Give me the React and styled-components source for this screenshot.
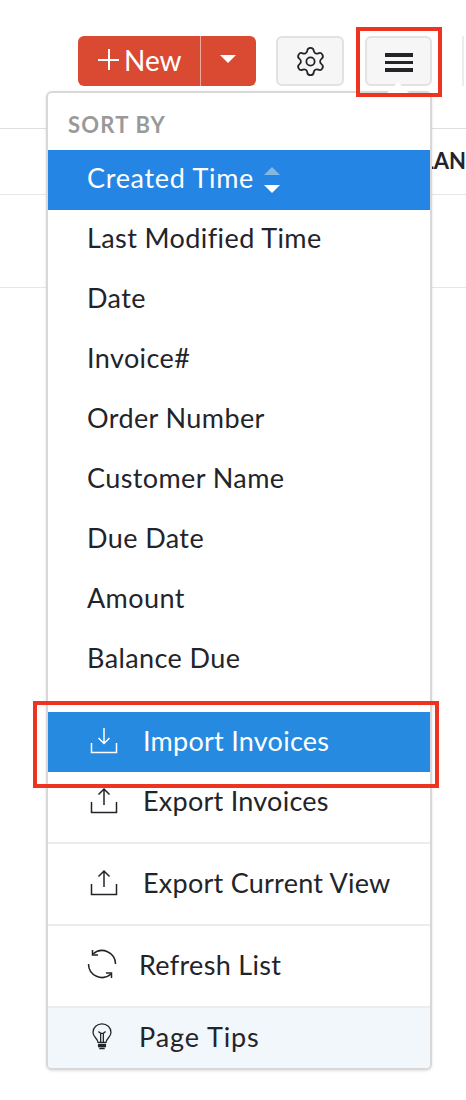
import React from 'react';
import styled, { createGlobalStyle } from 'styled-components';
import { Settings } from 'lucide-react';

const sortOptions = [
  'Last Modified Time',
  'Date',
  'Invoice#',
  'Order Number',
  'Customer Name',
  'Due Date',
  'Amount',
  'Balance Due',
];

const ImportIcon = () => (
  <svg width="28" height="28" viewBox="0 0 28 28" fill="none" stroke="currentColor" strokeWidth="1.5">
    <path d="M14 1v15M8.500 11l5.500 5.500 5.500-5.500" />
    <path d="M1.500 16v9.500h25V16" />
  </svg>
);

const ExportIcon = () => (
  <svg width="28" height="28" viewBox="0 0 28 28" fill="none" stroke="currentColor" strokeWidth="1.500">
    <path d="M14 18V2M8.500 7.500 14 2l5.500 5.500" />
    <path d="M1.500 15v10.500h25V15" />
  </svg>
);

const RefreshIcon = () => (
  <svg width="30" height="30" viewBox="0 0 30 30" fill="none" stroke="currentColor" strokeWidth="1.500">
    <path d="M6 5A13.500 13.500 0 0 1 28.500 15" />
    <path d="M5.500 1v5h5.500" />
    <path d="M24 25A13.500 13.500 0 0 1 1.500 15" />
    <path d="M24.500 29v-5H19" />
  </svg>
);

const BulbIcon = () => (
  <svg width="20" height="27" viewBox="0 0 22 30" fill="none" stroke="currentColor" strokeWidth="1.400">
    <path d="M6.500 21.500c0-4-5.500-6-5.500-11C1 5 5.500 1 11 1s10 4 10 9.500c0 5-5.500 7-5.500 11z" />
    <path d="M7 9.500l2.500 2h3l2.500-2M9.500 11.500v10M12.500 11.500v10" />
    <path d="M6.500 24h9M6.500 26h9M8 28.300h6" strokeWidth="1.800" />
  </svg>
);

const App = () => {
  return (
    <Page>
      <GlobalStyle />
      <Toolbar>
        <NewButton>
          <NewLabel>
            <PlusIcon />
            New
          </NewLabel>
          <NewCaret>
            <Caret />
          </NewCaret>
        </NewButton>
        <ToolButton $width={68}>
          <Settings size={33} strokeWidth={1.3} />
        </ToolButton>
        <ToolButton $width={67}>
          <BurgerLines />
          <Callout $inset="-11px -12px -13px -11px" />
        </ToolButton>
        <ToolbarDivider />
      </Toolbar>
      <HeaderRow>
        <HeaderLabel>LAN</HeaderLabel>
      </HeaderRow>
      <BodyRow />

      <Menu>
        <MenuHeading>SORT BY</MenuHeading>
        <MenuItem $active>
          Created Time
          <SortArrows>
            <ArrowUp />
            <ArrowDown />
          </SortArrows>
        </MenuItem>
        {sortOptions.map((option) => (
          <MenuItem key={option}>{option}</MenuItem>
        ))}
        <ActionGroup>
          <ActionItem $active>
            <ImportIcon />
            Import Invoices
            <Callout $inset="-11px -9px -16px -15px" />
          </ActionItem>
          <ActionItem>
            <ExportIcon />
            Export Invoices
          </ActionItem>
        </ActionGroup>
        <SingleGroup>
          <ActionItem>
            <ExportIcon />
            Export Current View
          </ActionItem>
        </SingleGroup>
        <SingleGroup>
          <UtilityItem>
            <RefreshIcon />
            Refresh List
          </UtilityItem>
        </SingleGroup>
        <TipsItem>
          <BulbIcon />
          Page Tips
        </TipsItem>
      </Menu>
    </Page>
  );
};

export default App;

const GlobalStyle = createGlobalStyle`
  html, body {
    margin: 0;
    background: #fff;
  }
  * {
    box-sizing: border-box;
  }
`;

const Page = styled.div`
  position: relative;
  width: 466px;
  height: 1100px;
  overflow: hidden;
  background: #fff;
  color: #23242a;
  font-family: Lato, "Liberation Sans", sans-serif;
`;

const Toolbar = styled.div`
  display: flex;
  align-items: flex-start;
  height: 129px;
  padding: 36px 0 0 78px;
  border-bottom: 1px solid #dedede;
`;

const NewButton = styled.div`
  display: flex;
  width: 178px;
  height: 50px;
  margin-right: 20px;
  border-radius: 6px;
  background: #da4a33;
  color: #fff;
`;

const NewLabel = styled.div`
  display: flex;
  align-items: center;
  gap: 5px;
  width: 123px;
  padding: 0 0 3px 20px;
  border-right: 1px solid #eda99c;
  font-size: 28px;
`;

const PlusIcon = styled.span`
  width: 21px;
  height: 21px;
  background:
    linear-gradient(#fff, #fff) center / 21px 2px no-repeat,
    linear-gradient(#fff, #fff) center / 2px 21px no-repeat;
`;

const NewCaret = styled.div`
  display: flex;
  flex: 1;
  align-items: center;
  justify-content: center;
  padding: 0 2px 4px 0;
`;

const Caret = styled.span`
  border-left: 8px solid transparent;
  border-right: 8px solid transparent;
  border-top: 8px solid #fff;
`;

const ToolButton = styled.div`
  position: relative;
  display: flex;
  flex: none;
  align-items: center;
  justify-content: center;
  width: ${(props) => props.$width}px;
  height: 50px;
  margin-right: 21px;
  border: 2px solid #e2e2e2;
  border-radius: 6px;
  background: #f6f6f6;
  color: #23242a;
`;

const BurgerLines = styled.span`
  width: 28px;
  height: 19px;
  margin-top: 3px;
  border-top: 4px solid #23242a;
  border-bottom: 4px solid #23242a;
  background: linear-gradient(#23242a, #23242a) center / 100% 3px no-repeat;
`;

const ToolbarDivider = styled.span`
  flex: none;
  width: 2px;
  height: 50px;
  margin-left: 9px;
  background: #ececec;
`;

const Callout = styled.span`
  position: absolute;
  inset: ${(props) => props.$inset};
  z-index: 5;
  border: 4px solid #ee3420;
  pointer-events: none;
`;

const HeaderRow = styled.div`
  display: flex;
  align-items: center;
  justify-content: flex-end;
  height: 66px;
  padding-bottom: 2px;
  border-bottom: 1px solid #e6e6e6;
`;

const HeaderLabel = styled.span`
  font-size: 22px;
  font-weight: 700;
`;

const BodyRow = styled.div`
  height: 93px;
  border-bottom: 1px solid #e6e6e6;
`;

const Menu = styled.div`
  position: absolute;
  top: 91px;
  left: 46px;
  display: flex;
  flex-direction: column;
  width: 386px;
  height: 979px;
  border: 2px solid #d8d8d8;
  border-radius: 6px;
  background: #fff;
  box-shadow: 0 1px 3px rgba(0, 0, 0, 0.12);

  &::before {
    content: '';
    position: absolute;
    top: -11px;
    left: 339px;
    border-left: 11px solid transparent;
    border-right: 11px solid transparent;
    border-bottom: 11px solid #fff;
  }
`;

const MenuHeading = styled.div`
  display: flex;
  flex: none;
  align-items: center;
  height: 57px;
  padding: 6px 0 0 20px;
  color: #999;
  font-size: 22px;
  font-weight: 700;
  letter-spacing: 1.2px;
`;

const MenuItem = styled.div`
  display: flex;
  align-items: center;
  flex: none;
  height: 60px;
  padding: 0 0 5px 39px;
  font-size: 27px;
  letter-spacing: ${(props) => (props.$active ? '0.7px' : '0.4px')};
  background: ${(props) => (props.$active ? '#2585e4' : 'transparent')};
  color: ${(props) => (props.$active ? '#fff' : '#23242a')};
`;

const SortArrows = styled.span`
  display: flex;
  flex-direction: column;
  gap: 10px;
  margin: 5px 0 0 10px;
`;

const ArrowUp = styled.span`
  border-left: 8px solid transparent;
  border-right: 8px solid transparent;
  border-bottom: 8px solid #85b8dc;
`;

const ArrowDown = styled.span`
  border-left: 8px solid transparent;
  border-right: 8px solid transparent;
  border-top: 8px solid #fff;
`;

const ActionGroup = styled.div`
  display: flex;
  flex: none;
  flex-direction: column;
  height: 154px;
  padding-top: 22px;
  border-bottom: 2px solid #ececec;
`;

const SingleGroup = styled.div`
  display: flex;
  flex: none;
  flex-direction: column;
  justify-content: center;
  height: 82px;
  border-bottom: 2px solid #ececec;
`;

const ActionItem = styled.div`
  position: relative;
  display: flex;
  flex: none;
  align-items: center;
  gap: 25px;
  height: 60px;
  padding: 0 0 3px 42px;
  font-size: 27px;
  letter-spacing: 0.25px;
  background: ${(props) => (props.$active ? '#268ae0' : 'transparent')};
  color: ${(props) => (props.$active ? '#fff' : '#23242a')};
`;

const UtilityItem = styled.div`
  display: flex;
  flex: none;
  align-items: center;
  gap: 22px;
  height: 60px;
  padding: 0 0 4px 39px;
  font-size: 27px;
  letter-spacing: 0.3px;
`;

const TipsItem = styled.div`
  display: flex;
  flex: 1;
  align-items: center;
  gap: 27px;
  padding: 0 0 4px 44px;
  border-radius: 0 0 4px 4px;
  background: #f2f7fc;
  font-size: 27px;
  letter-spacing: 0.9px;
`;
